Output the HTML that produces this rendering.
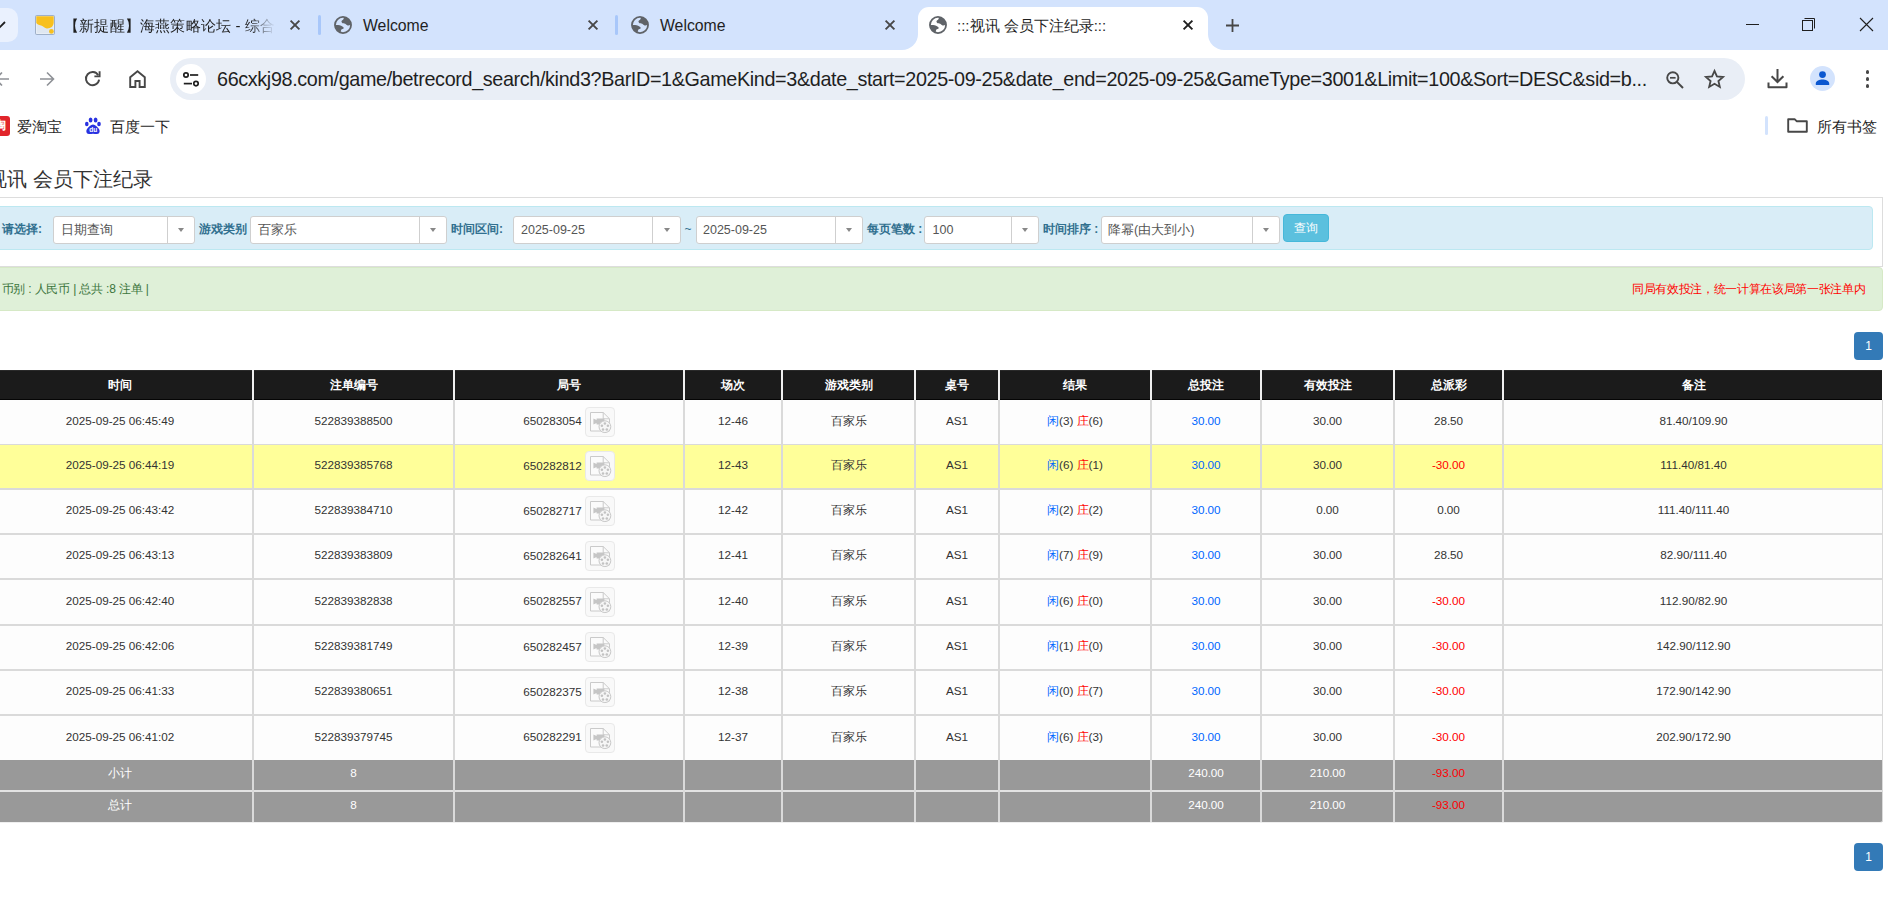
<!DOCTYPE html><html><head><meta charset="utf-8"><title>:::视讯 会员下注纪录:::</title><style>
*{box-sizing:border-box}
html,body{margin:0;padding:0}
body{width:1888px;height:898px;overflow:hidden;position:relative;background:#fff;font-family:"Liberation Sans",sans-serif;color:#333}
.a{position:absolute}
.t{position:absolute;white-space:nowrap;line-height:1}
svg{position:absolute;overflow:visible}
.sel{position:absolute;top:216px;height:28px;background:#fff;border:1px solid #cfcfcf;border-radius:3px}
.sel .v{position:absolute;top:0;line-height:26px;font-size:12.5px;color:#555;white-space:nowrap}
.sel .d{position:absolute;top:0;bottom:0;width:1px;background:#cfcfcf}
.sel .c{position:absolute;top:11px;width:0;height:0;border-left:3.5px solid transparent;border-right:3.5px solid transparent;border-top:4px solid #888}
.lbl{position:absolute;top:222px;font-size:12px;font-weight:bold;color:#31708f;white-space:nowrap;line-height:14px}
.cell{position:absolute;text-align:center;white-space:nowrap;font-size:11.7px;line-height:14px}
.vl{position:absolute;width:2px;background:#dadada}
.hl{position:absolute;height:2px;background:#dadada;left:0;width:1883px}
</style></head><body><div class="a" style="left:0;top:0;width:1888px;height:50px;background:#d3e3fd"></div>
<div class="a" style="left:-22px;top:8px;width:40px;height:34px;border-radius:10px;background:#eaf1fe"></div>
<svg style="left:-5px;top:18px" width="12" height="12" viewBox="0 0 12 12"><path d="M0 4 L5 9 L10 4" fill="none" stroke="#1f1f1f" stroke-width="1.8"/></svg>
<svg style="left:35px;top:15px" width="20" height="20" viewBox="0 0 20 20"><rect x="0.6" y="0.6" width="18.8" height="18.8" rx="1.5" fill="#dfe7f1" stroke="#9fb0c8" stroke-width="1.2"/><rect x="1.6" y="1.6" width="16.8" height="16.8" fill="none" stroke="#eef3fa" stroke-width="0.8"/><path d="M1.3 1.3 H18.7 V7.5 C18.6 11.5 15.6 13.6 11.8 13.4 C9.6 13.2 8.6 11.6 6.8 10.8 C4.6 9.8 2.2 9.8 1.3 8 Z" fill="#f8c01e"/><circle cx="16.4" cy="16.4" r="2.4" fill="#f8c01e"/></svg>
<div class="t" style="left:64px;top:17px;font-size:15px;letter-spacing:0.2px;color:#1f1f1f;width:211px;overflow:hidden;line-height:17px;-webkit-mask-image:linear-gradient(90deg,#000 186px,transparent 211px)">【新提醒】海燕策略论坛 - 综合</div>
<svg style="left:290px;top:20px" width="10" height="10" viewBox="0 0 10 10"><path d="M0.6 0.6 L9.4 9.4 M9.4 0.6 L0.6 9.4" stroke="#474747" stroke-width="1.9" fill="none"/></svg>
<div class="a" style="left:318px;top:15px;width:3px;height:20px;border-radius:2px;background:#a8c7fa"></div>
<svg style="left:334px;top:16px" width="18" height="18" viewBox="0 0 18 18"><circle cx="9" cy="9" r="8.05" fill="none" stroke="#5f6368" stroke-width="1.8"/><path d="M9.9 1.2 C12.5 1.4 15.6 3.4 16.6 6.6 L16.8 8.6 C15.6 9.4 14.6 9.6 13.6 9.4 C12.6 9.2 12.2 8.2 11.2 7.8 C10.2 7.4 8.6 7.6 8 6.8 C7.4 6 7.2 5.2 8 4.6 C9 3.8 9.8 3.2 9.9 1.2 Z" fill="#5f6368"/><path d="M1.2 9.1 C3.5 8.9 6.5 9.2 8.4 10.4 C9.4 11 10 11.6 9.7 12.2 C9.2 13 8 13 7.4 13.6 C6.8 14.4 6.8 15.4 6.8 16.8 C3.8 16 1.6 13 1.2 9.1 Z" fill="#5f6368"/></svg>
<div class="t" style="left:363px;top:17px;font-size:15.8px;color:#1f1f1f;line-height:17px">Welcome</div>
<svg style="left:588px;top:20px" width="10" height="10" viewBox="0 0 10 10"><path d="M0.6 0.6 L9.4 9.4 M9.4 0.6 L0.6 9.4" stroke="#474747" stroke-width="1.9" fill="none"/></svg>
<div class="a" style="left:615px;top:15px;width:3px;height:20px;border-radius:2px;background:#a8c7fa"></div>
<svg style="left:631px;top:16px" width="18" height="18" viewBox="0 0 18 18"><circle cx="9" cy="9" r="8.05" fill="none" stroke="#5f6368" stroke-width="1.8"/><path d="M9.9 1.2 C12.5 1.4 15.6 3.4 16.6 6.6 L16.8 8.6 C15.6 9.4 14.6 9.6 13.6 9.4 C12.6 9.2 12.2 8.2 11.2 7.8 C10.2 7.4 8.6 7.6 8 6.8 C7.4 6 7.2 5.2 8 4.6 C9 3.8 9.8 3.2 9.9 1.2 Z" fill="#5f6368"/><path d="M1.2 9.1 C3.5 8.9 6.5 9.2 8.4 10.4 C9.4 11 10 11.6 9.7 12.2 C9.2 13 8 13 7.4 13.6 C6.8 14.4 6.8 15.4 6.8 16.8 C3.8 16 1.6 13 1.2 9.1 Z" fill="#5f6368"/></svg>
<div class="t" style="left:660px;top:17px;font-size:15.8px;color:#1f1f1f;line-height:17px">Welcome</div>
<svg style="left:885px;top:20px" width="10" height="10" viewBox="0 0 10 10"><path d="M0.6 0.6 L9.4 9.4 M9.4 0.6 L0.6 9.4" stroke="#474747" stroke-width="1.9" fill="none"/></svg>
<div class="a" style="left:918px;top:7px;width:290px;height:43px;background:#fff;border-radius:11px 11px 0 0"></div>
<div class="a" style="left:902px;top:34px;width:16px;height:16px;background:#fff"></div>
<div class="a" style="left:902px;top:34px;width:16px;height:16px;background:#d3e3fd;border-bottom-right-radius:16px"></div>
<div class="a" style="left:1208px;top:34px;width:16px;height:16px;background:#fff"></div>
<div class="a" style="left:1208px;top:34px;width:16px;height:16px;background:#d3e3fd;border-bottom-left-radius:16px"></div>
<svg style="left:929px;top:16px" width="18" height="18" viewBox="0 0 18 18"><circle cx="9" cy="9" r="8.05" fill="none" stroke="#5f6368" stroke-width="1.8"/><path d="M9.9 1.2 C12.5 1.4 15.6 3.4 16.6 6.6 L16.8 8.6 C15.6 9.4 14.6 9.6 13.6 9.4 C12.6 9.2 12.2 8.2 11.2 7.8 C10.2 7.4 8.6 7.6 8 6.8 C7.4 6 7.2 5.2 8 4.6 C9 3.8 9.8 3.2 9.9 1.2 Z" fill="#5f6368"/><path d="M1.2 9.1 C3.5 8.9 6.5 9.2 8.4 10.4 C9.4 11 10 11.6 9.7 12.2 C9.2 13 8 13 7.4 13.6 C6.8 14.4 6.8 15.4 6.8 16.8 C3.8 16 1.6 13 1.2 9.1 Z" fill="#5f6368"/></svg>
<div class="t" style="left:957px;top:17px;font-size:15px;color:#1f1f1f;line-height:17px">:::视讯 会员下注纪录:::</div>
<svg style="left:1183px;top:20px" width="10" height="10" viewBox="0 0 10 10"><path d="M0.6 0.6 L9.4 9.4 M9.4 0.6 L0.6 9.4" stroke="#1f1f1f" stroke-width="1.9" fill="none"/></svg>
<svg style="left:1226px;top:19px" width="13" height="13" viewBox="0 0 13 13"><path d="M6.5 0 V13 M0 6.5 H13" stroke="#474747" stroke-width="1.8"/></svg>
<div class="a" style="left:1746px;top:24px;width:13px;height:1px;background:#1f1f1f"></div>
<svg style="left:1802px;top:18px" width="13" height="13" viewBox="0 0 13 13"><rect x="0.5" y="2.5" width="10" height="10" fill="none" stroke="#1f1f1f" stroke-width="1"/><path d="M2.5 0.5 H12.5 V10.5" fill="none" stroke="#1f1f1f" stroke-width="1"/></svg>
<svg style="left:1860px;top:18px" width="13" height="13" viewBox="0 0 13 13"><path d="M0 0 L13 13 M13 0 L0 13" stroke="#1f1f1f" stroke-width="1.1"/></svg>
<svg style="left:-6px;top:71px" width="16" height="16" viewBox="0 0 16 16"><path d="M15 8 H2 M8 1.5 L1.5 8 L8 14.5" fill="none" stroke="#8e9196" stroke-width="1.6"/></svg>
<svg style="left:39px;top:71px" width="16" height="16" viewBox="0 0 16 16"><path d="M1 8 H14 M8 1.5 L14.5 8 L8 14.5" fill="none" stroke="#8e9196" stroke-width="1.6"/></svg>
<svg style="left:84px;top:70px" width="17" height="17" viewBox="0 0 17 17"><path d="M14.2 5.2 A6.6 6.6 0 1 0 15.1 9.6" fill="none" stroke="#474747" stroke-width="1.9"/><path d="M15.6 1.2 V6.4 H10.4" fill="none" stroke="#474747" stroke-width="1.9"/></svg>
<svg style="left:129px;top:70px" width="17" height="18" viewBox="0 0 17 18"><path d="M1.2 17 V7.2 L8.5 1.2 L15.8 7.2 V17 H10.6 V11 H6.4 V17 Z" fill="none" stroke="#474747" stroke-width="1.9" stroke-linejoin="miter"/></svg>
<div class="a" style="left:170px;top:58px;width:1575px;height:42px;border-radius:21px;background:#e9eef6"></div>
<div class="a" style="left:176px;top:64px;width:30px;height:30px;border-radius:50%;background:#fff"></div>
<svg style="left:183px;top:72px" width="16" height="15" viewBox="0 0 16 15"><circle cx="3" cy="3" r="2.2" fill="none" stroke="#1f1f1f" stroke-width="1.7"/><path d="M7 3 H15.2" stroke="#1f1f1f" stroke-width="1.7"/><circle cx="13" cy="11.6" r="2.2" fill="none" stroke="#1f1f1f" stroke-width="1.7"/><path d="M0.8 11.6 H9" stroke="#1f1f1f" stroke-width="1.7"/></svg>
<div class="t" style="left:217px;top:68.5px;font-size:19.8px;letter-spacing:-0.365px;line-height:21px;color:#1f1f1f">66cxkj98.com/game/betrecord_search/kind3?BarID=1&amp;GameKind=3&amp;date_start=2025-09-25&amp;date_end=2025-09-25&amp;GameType=3001&amp;Limit=100&amp;Sort=DESC&amp;sid=b...</div>
<svg style="left:1666px;top:71px" width="18" height="18" viewBox="0 0 18 18"><circle cx="6.8" cy="6.8" r="5.6" fill="none" stroke="#474747" stroke-width="1.9"/><path d="M4 6.8 H9.6" stroke="#474747" stroke-width="1.7"/><path d="M10.9 10.9 L17 17" stroke="#474747" stroke-width="2"/></svg>
<svg style="left:1704px;top:69px" width="21" height="20" viewBox="0 0 24 23"><path d="M12 2.2 L14.8 8.6 L21.8 9.2 L16.5 13.8 L18.1 20.6 L12 17 L5.9 20.6 L7.5 13.8 L2.2 9.2 L9.2 8.6 Z" fill="none" stroke="#474747" stroke-width="2.1" stroke-linejoin="miter"/></svg>
<svg style="left:1767px;top:68px" width="21" height="21" viewBox="0 0 21 21"><path d="M10.5 1 V14 M4.6 8.2 L10.5 14 L16.4 8.2" fill="none" stroke="#474747" stroke-width="2"/><path d="M1.5 14.5 V19.2 H19.5 V14.5" fill="none" stroke="#474747" stroke-width="2" stroke-linejoin="round"/></svg>
<div class="a" style="left:1810px;top:66px;width:25px;height:25px;border-radius:50%;background:#d3e3fd"></div>
<svg style="left:1815px;top:71px" width="15" height="14" viewBox="0 0 15 14"><circle cx="7.5" cy="3.6" r="3.4" fill="#0b57d0"/><path d="M0.8 14 V12.4 C0.8 9.6 4.6 8.4 7.5 8.4 C10.4 8.4 14.2 9.6 14.2 12.4 V14 Z" fill="#0b57d0"/></svg>
<div class="a" style="left:1865.8px;top:70.3px;width:3.4px;height:3.4px;border-radius:50%;background:#474747"></div>
<div class="a" style="left:1865.8px;top:77.3px;width:3.4px;height:3.4px;border-radius:50%;background:#474747"></div>
<div class="a" style="left:1865.8px;top:84.3px;width:3.4px;height:3.4px;border-radius:50%;background:#474747"></div>
<div class="a" style="left:-10px;top:116px;width:20px;height:20px;border-radius:3px;background:#e1252b"></div>
<div class="t" style="left:-6px;top:119px;font-size:12px;color:#fff;font-weight:bold">淘</div>
<div class="t" style="left:17px;top:118.5px;font-size:14.7px;line-height:17px;color:#1f1f1f">爱淘宝</div>
<svg style="left:84px;top:117px" width="18" height="18" viewBox="0 0 18 18"><ellipse cx="6.6" cy="2.9" rx="1.9" ry="2.5" fill="#2932e1"/><ellipse cx="11.6" cy="2.9" rx="1.9" ry="2.5" fill="#2932e1"/><ellipse cx="2.8" cy="7" rx="1.8" ry="2.2" fill="#2932e1"/><ellipse cx="15" cy="7" rx="1.8" ry="2.2" fill="#2932e1"/><path d="M9 7.4 C6.6 7.4 4.8 9.8 3.2 11.8 C1.8 13.6 2 16.9 5 17.1 C6.6 17.2 7.6 16.7 9 16.7 C10.4 16.7 11.4 17.2 13 17.1 C16 16.9 16.2 13.6 14.8 11.8 C13.2 9.8 11.4 7.4 9 7.4 Z" fill="#2932e1"/><text x="9.2" y="15.4" font-size="6.6" font-family="Liberation Sans" font-weight="bold" fill="#fff" text-anchor="middle">du</text></svg>
<div class="t" style="left:110px;top:118.5px;font-size:14.7px;line-height:17px;color:#1f1f1f">百度一下</div>
<div class="a" style="left:1765px;top:116px;width:3px;height:19px;border-radius:2px;background:#d3e3fd"></div>
<svg style="left:1787px;top:118px" width="21" height="15" viewBox="0 0 21 15"><path d="M1.2 13.8 V1.2 H7.6 L9.6 3.2 H19.8 V13.8 Z" fill="none" stroke="#474747" stroke-width="1.9" stroke-linejoin="round"/></svg>
<div class="t" style="left:1817px;top:118.5px;font-size:14.7px;line-height:17px;color:#1f1f1f">所有书签</div>
<div class="t" style="left:-13px;top:168px;font-size:20px;line-height:23px;color:#333">视讯 会员下注纪录</div>
<div class="a" style="left:-20px;top:197px;width:1903px;height:70px;border:1px solid #dddddd;border-radius:0"></div>
<div class="a" style="left:-20px;top:206px;width:1893px;height:44px;background:#d9edf7;border:1px solid #bce8f1;border-radius:4px"></div>
<div class="lbl" style="left:2px">请选择:</div>
<div class="sel" style="left:52.5px;width:142.0px"><div class="v" style="left:7.5px">日期查询</div><div class="d" style="left:113.5px"></div><div class="c" style="left:124.75px"></div></div>
<div class="lbl" style="left:198.5px">游戏类别</div>
<div class="sel" style="left:249.5px;width:197.0px"><div class="v" style="left:7.5px">百家乐</div><div class="d" style="left:168.5px"></div><div class="c" style="left:179.75px"></div></div>
<div class="lbl" style="left:451px">时间区间:</div>
<div class="sel" style="left:512.5px;width:168.0px"><div class="v" style="left:7.5px">2025-09-25</div><div class="d" style="left:138.5px"></div><div class="c" style="left:150.25px"></div></div>
<div class="t" style="left:684.5px;top:223px;font-size:12px;color:#31708f">~</div>
<div class="sel" style="left:695.5px;width:167.0px"><div class="v" style="left:6.5px">2025-09-25</div><div class="d" style="left:138.0px"></div><div class="c" style="left:149.5px"></div></div>
<div class="lbl" style="left:867px">每页笔数 :</div>
<div class="sel" style="left:923.5px;width:115.0px"><div class="v" style="left:8.0px">100</div><div class="d" style="left:86.5px"></div><div class="c" style="left:97.75px"></div></div>
<div class="lbl" style="left:1043px">时间排序 :</div>
<div class="sel" style="left:1100.5px;width:179.0px"><div class="v" style="left:6.5px">降幂(由大到小)</div><div class="d" style="left:150.0px"></div><div class="c" style="left:161.5px"></div></div>
<div class="a" style="left:1283px;top:214px;width:46px;height:28px;border-radius:4px;background:#5bc0de;border:1px solid #46b8da"></div>
<div class="t" style="left:1294px;top:221px;font-size:11.8px;line-height:14px;color:#fff">查询</div>
<div class="a" style="left:-20px;top:267px;width:1903px;height:44px;background:#dff0d8;border:1px solid #d6e9c6;border-radius:4px"></div>
<div class="t" style="left:1.5px;top:281.5px;font-size:12px;letter-spacing:-0.18px;line-height:14px;color:#3c763d">币别 : 人民币 | 总共 :8 注单 |</div>
<div class="t" style="left:1632px;top:281.5px;font-size:12px;letter-spacing:-0.34px;line-height:14px;color:#ff0000">同局有效投注，统一计算在该局第一张注单内</div>
<div class="a" style="left:1854px;top:332px;width:29px;height:28px;border-radius:4px;background:#337ab7"></div><div class="t" style="left:1854px;top:339px;width:29px;text-align:center;font-size:12px;line-height:14px;color:#fff">1</div>
<div class="a" style="left:1854px;top:843px;width:29px;height:28px;border-radius:4px;background:#337ab7"></div><div class="t" style="left:1854px;top:850px;width:29px;text-align:center;font-size:12px;line-height:14px;color:#fff">1</div>
<div class="a" style="left:0;top:370px;width:1882px;height:30px;background:#1b1b1b;border-top:1px solid #2a2a2a;border-bottom:1px solid #050505"></div>
<div class="cell" style="left:-12px;width:264px;top:378px;color:#fff;font-weight:bold;font-size:12px">时间</div>
<div class="cell" style="left:254px;width:199px;top:378px;color:#fff;font-weight:bold;font-size:12px">注单编号</div>
<div class="cell" style="left:455px;width:228px;top:378px;color:#fff;font-weight:bold;font-size:12px">局号</div>
<div class="cell" style="left:685px;width:96px;top:378px;color:#fff;font-weight:bold;font-size:12px">场次</div>
<div class="cell" style="left:783px;width:131px;top:378px;color:#fff;font-weight:bold;font-size:12px">游戏类别</div>
<div class="cell" style="left:916px;width:82px;top:378px;color:#fff;font-weight:bold;font-size:12px">桌号</div>
<div class="cell" style="left:1000px;width:150px;top:378px;color:#fff;font-weight:bold;font-size:12px">结果</div>
<div class="cell" style="left:1152px;width:108px;top:378px;color:#fff;font-weight:bold;font-size:12px">总投注</div>
<div class="cell" style="left:1262px;width:131px;top:378px;color:#fff;font-weight:bold;font-size:12px">有效投注</div>
<div class="cell" style="left:1395px;width:107px;top:378px;color:#fff;font-weight:bold;font-size:12px">总派彩</div>
<div class="cell" style="left:1504px;width:379px;top:378px;color:#fff;font-weight:bold;font-size:12px">备注</div>
<div class="a" style="left:0;top:400px;width:1882px;height:44px;background:#fdfdfd"></div>
<div class="cell" style="left:-12px;width:264px;top:413.5px">2025-09-25 06:45:49</div>
<div class="cell" style="left:254px;width:199px;top:413.5px">522839388500</div>
<div class="cell" style="left:455px;width:228px;top:413.5px;top:405.0px;line-height:31px">650283054<span style="display:inline-block;vertical-align:middle;position:relative;width:30px;height:30px;margin-left:3px;border:1px solid #e9e9e9;border-radius:4px;background:#f9f9f9"><svg style="left:0px;top:0px" width="28" height="28" viewBox="0 0 28 28"><path d="M4.5 4.5 H17.2 L23.5 10.8 V23 H4.5 Z" fill="#fbfbfb" stroke="#cacaca" stroke-width="1"/><path d="M17.2 4.5 V10.8 H23.5" fill="none" stroke="#cacaca" stroke-width="1"/><path d="M7.4 10.4 L10.6 12 V15 L7.4 16.6 Z M10.6 10.4 H18.4 V16.6 H10.6 Z" fill="#c6c6c6"/><circle cx="18.9" cy="18.7" r="5.9" fill="#f6f6f6" stroke="#c8c8c8" stroke-width="1"/><circle cx="18.9" cy="15.6" r="1.25" fill="#c2c2c2"/><circle cx="21.9" cy="17.8" r="1.25" fill="#c2c2c2"/><circle cx="20.8" cy="21.4" r="1.25" fill="#c2c2c2"/><circle cx="17" cy="21.4" r="1.25" fill="#c2c2c2"/><circle cx="15.9" cy="17.8" r="1.25" fill="#c2c2c2"/></svg></span></div>
<div class="cell" style="left:685px;width:96px;top:413.5px">12-46</div>
<div class="cell" style="left:783px;width:131px;top:413.5px">百家乐</div>
<div class="cell" style="left:916px;width:82px;top:413.5px">AS1</div>
<div class="cell" style="left:1000px;width:150px;top:413.5px"><span style="color:#0066ff">闲</span>(3) <span style="color:#ff0000">庄</span>(6)</div>
<div class="cell" style="left:1152px;width:108px;top:413.5px;color:#0066ff">30.00</div>
<div class="cell" style="left:1262px;width:131px;top:413.5px">30.00</div>
<div class="cell" style="left:1395px;width:107px;top:413.5px">28.50</div>
<div class="cell" style="left:1504px;width:379px;top:413.5px">81.40/109.90</div>
<div class="a" style="left:0;top:445px;width:1882px;height:43px;background:#ffff99"></div>
<div class="cell" style="left:-12px;width:264px;top:458.0px">2025-09-25 06:44:19</div>
<div class="cell" style="left:254px;width:199px;top:458.0px">522839385768</div>
<div class="cell" style="left:455px;width:228px;top:458.0px;top:449.5px;line-height:31px">650282812<span style="display:inline-block;vertical-align:middle;position:relative;width:30px;height:30px;margin-left:3px;border:1px solid #e9e9e9;border-radius:4px;background:#f9f9f9"><svg style="left:0px;top:0px" width="28" height="28" viewBox="0 0 28 28"><path d="M4.5 4.5 H17.2 L23.5 10.8 V23 H4.5 Z" fill="#fbfbfb" stroke="#cacaca" stroke-width="1"/><path d="M17.2 4.5 V10.8 H23.5" fill="none" stroke="#cacaca" stroke-width="1"/><path d="M7.4 10.4 L10.6 12 V15 L7.4 16.6 Z M10.6 10.4 H18.4 V16.6 H10.6 Z" fill="#c6c6c6"/><circle cx="18.9" cy="18.7" r="5.9" fill="#f6f6f6" stroke="#c8c8c8" stroke-width="1"/><circle cx="18.9" cy="15.6" r="1.25" fill="#c2c2c2"/><circle cx="21.9" cy="17.8" r="1.25" fill="#c2c2c2"/><circle cx="20.8" cy="21.4" r="1.25" fill="#c2c2c2"/><circle cx="17" cy="21.4" r="1.25" fill="#c2c2c2"/><circle cx="15.9" cy="17.8" r="1.25" fill="#c2c2c2"/></svg></span></div>
<div class="cell" style="left:685px;width:96px;top:458.0px">12-43</div>
<div class="cell" style="left:783px;width:131px;top:458.0px">百家乐</div>
<div class="cell" style="left:916px;width:82px;top:458.0px">AS1</div>
<div class="cell" style="left:1000px;width:150px;top:458.0px"><span style="color:#0066ff">闲</span>(6) <span style="color:#ff0000">庄</span>(1)</div>
<div class="cell" style="left:1152px;width:108px;top:458.0px;color:#0066ff">30.00</div>
<div class="cell" style="left:1262px;width:131px;top:458.0px">30.00</div>
<div class="cell" style="left:1395px;width:107px;top:458.0px;color:#ff0000">-30.00</div>
<div class="cell" style="left:1504px;width:379px;top:458.0px">111.40/81.40</div>
<div class="a" style="left:0;top:490px;width:1882px;height:43px;background:#fdfdfd"></div>
<div class="cell" style="left:-12px;width:264px;top:503.0px">2025-09-25 06:43:42</div>
<div class="cell" style="left:254px;width:199px;top:503.0px">522839384710</div>
<div class="cell" style="left:455px;width:228px;top:503.0px;top:494.5px;line-height:31px">650282717<span style="display:inline-block;vertical-align:middle;position:relative;width:30px;height:30px;margin-left:3px;border:1px solid #e9e9e9;border-radius:4px;background:#f9f9f9"><svg style="left:0px;top:0px" width="28" height="28" viewBox="0 0 28 28"><path d="M4.5 4.5 H17.2 L23.5 10.8 V23 H4.5 Z" fill="#fbfbfb" stroke="#cacaca" stroke-width="1"/><path d="M17.2 4.5 V10.8 H23.5" fill="none" stroke="#cacaca" stroke-width="1"/><path d="M7.4 10.4 L10.6 12 V15 L7.4 16.6 Z M10.6 10.4 H18.4 V16.6 H10.6 Z" fill="#c6c6c6"/><circle cx="18.9" cy="18.7" r="5.9" fill="#f6f6f6" stroke="#c8c8c8" stroke-width="1"/><circle cx="18.9" cy="15.6" r="1.25" fill="#c2c2c2"/><circle cx="21.9" cy="17.8" r="1.25" fill="#c2c2c2"/><circle cx="20.8" cy="21.4" r="1.25" fill="#c2c2c2"/><circle cx="17" cy="21.4" r="1.25" fill="#c2c2c2"/><circle cx="15.9" cy="17.8" r="1.25" fill="#c2c2c2"/></svg></span></div>
<div class="cell" style="left:685px;width:96px;top:503.0px">12-42</div>
<div class="cell" style="left:783px;width:131px;top:503.0px">百家乐</div>
<div class="cell" style="left:916px;width:82px;top:503.0px">AS1</div>
<div class="cell" style="left:1000px;width:150px;top:503.0px"><span style="color:#0066ff">闲</span>(2) <span style="color:#ff0000">庄</span>(2)</div>
<div class="cell" style="left:1152px;width:108px;top:503.0px;color:#0066ff">30.00</div>
<div class="cell" style="left:1262px;width:131px;top:503.0px">0.00</div>
<div class="cell" style="left:1395px;width:107px;top:503.0px">0.00</div>
<div class="cell" style="left:1504px;width:379px;top:503.0px">111.40/111.40</div>
<div class="a" style="left:0;top:535px;width:1882px;height:43px;background:#fdfdfd"></div>
<div class="cell" style="left:-12px;width:264px;top:548.0px">2025-09-25 06:43:13</div>
<div class="cell" style="left:254px;width:199px;top:548.0px">522839383809</div>
<div class="cell" style="left:455px;width:228px;top:548.0px;top:539.5px;line-height:31px">650282641<span style="display:inline-block;vertical-align:middle;position:relative;width:30px;height:30px;margin-left:3px;border:1px solid #e9e9e9;border-radius:4px;background:#f9f9f9"><svg style="left:0px;top:0px" width="28" height="28" viewBox="0 0 28 28"><path d="M4.5 4.5 H17.2 L23.5 10.8 V23 H4.5 Z" fill="#fbfbfb" stroke="#cacaca" stroke-width="1"/><path d="M17.2 4.5 V10.8 H23.5" fill="none" stroke="#cacaca" stroke-width="1"/><path d="M7.4 10.4 L10.6 12 V15 L7.4 16.6 Z M10.6 10.4 H18.4 V16.6 H10.6 Z" fill="#c6c6c6"/><circle cx="18.9" cy="18.7" r="5.9" fill="#f6f6f6" stroke="#c8c8c8" stroke-width="1"/><circle cx="18.9" cy="15.6" r="1.25" fill="#c2c2c2"/><circle cx="21.9" cy="17.8" r="1.25" fill="#c2c2c2"/><circle cx="20.8" cy="21.4" r="1.25" fill="#c2c2c2"/><circle cx="17" cy="21.4" r="1.25" fill="#c2c2c2"/><circle cx="15.9" cy="17.8" r="1.25" fill="#c2c2c2"/></svg></span></div>
<div class="cell" style="left:685px;width:96px;top:548.0px">12-41</div>
<div class="cell" style="left:783px;width:131px;top:548.0px">百家乐</div>
<div class="cell" style="left:916px;width:82px;top:548.0px">AS1</div>
<div class="cell" style="left:1000px;width:150px;top:548.0px"><span style="color:#0066ff">闲</span>(7) <span style="color:#ff0000">庄</span>(9)</div>
<div class="cell" style="left:1152px;width:108px;top:548.0px;color:#0066ff">30.00</div>
<div class="cell" style="left:1262px;width:131px;top:548.0px">30.00</div>
<div class="cell" style="left:1395px;width:107px;top:548.0px">28.50</div>
<div class="cell" style="left:1504px;width:379px;top:548.0px">82.90/111.40</div>
<div class="a" style="left:0;top:580px;width:1882px;height:44px;background:#fdfdfd"></div>
<div class="cell" style="left:-12px;width:264px;top:593.5px">2025-09-25 06:42:40</div>
<div class="cell" style="left:254px;width:199px;top:593.5px">522839382838</div>
<div class="cell" style="left:455px;width:228px;top:593.5px;top:585.0px;line-height:31px">650282557<span style="display:inline-block;vertical-align:middle;position:relative;width:30px;height:30px;margin-left:3px;border:1px solid #e9e9e9;border-radius:4px;background:#f9f9f9"><svg style="left:0px;top:0px" width="28" height="28" viewBox="0 0 28 28"><path d="M4.5 4.5 H17.2 L23.5 10.8 V23 H4.5 Z" fill="#fbfbfb" stroke="#cacaca" stroke-width="1"/><path d="M17.2 4.5 V10.8 H23.5" fill="none" stroke="#cacaca" stroke-width="1"/><path d="M7.4 10.4 L10.6 12 V15 L7.4 16.6 Z M10.6 10.4 H18.4 V16.6 H10.6 Z" fill="#c6c6c6"/><circle cx="18.9" cy="18.7" r="5.9" fill="#f6f6f6" stroke="#c8c8c8" stroke-width="1"/><circle cx="18.9" cy="15.6" r="1.25" fill="#c2c2c2"/><circle cx="21.9" cy="17.8" r="1.25" fill="#c2c2c2"/><circle cx="20.8" cy="21.4" r="1.25" fill="#c2c2c2"/><circle cx="17" cy="21.4" r="1.25" fill="#c2c2c2"/><circle cx="15.9" cy="17.8" r="1.25" fill="#c2c2c2"/></svg></span></div>
<div class="cell" style="left:685px;width:96px;top:593.5px">12-40</div>
<div class="cell" style="left:783px;width:131px;top:593.5px">百家乐</div>
<div class="cell" style="left:916px;width:82px;top:593.5px">AS1</div>
<div class="cell" style="left:1000px;width:150px;top:593.5px"><span style="color:#0066ff">闲</span>(6) <span style="color:#ff0000">庄</span>(0)</div>
<div class="cell" style="left:1152px;width:108px;top:593.5px;color:#0066ff">30.00</div>
<div class="cell" style="left:1262px;width:131px;top:593.5px">30.00</div>
<div class="cell" style="left:1395px;width:107px;top:593.5px;color:#ff0000">-30.00</div>
<div class="cell" style="left:1504px;width:379px;top:593.5px">112.90/82.90</div>
<div class="a" style="left:0;top:626px;width:1882px;height:43px;background:#fdfdfd"></div>
<div class="cell" style="left:-12px;width:264px;top:639.0px">2025-09-25 06:42:06</div>
<div class="cell" style="left:254px;width:199px;top:639.0px">522839381749</div>
<div class="cell" style="left:455px;width:228px;top:639.0px;top:630.5px;line-height:31px">650282457<span style="display:inline-block;vertical-align:middle;position:relative;width:30px;height:30px;margin-left:3px;border:1px solid #e9e9e9;border-radius:4px;background:#f9f9f9"><svg style="left:0px;top:0px" width="28" height="28" viewBox="0 0 28 28"><path d="M4.5 4.5 H17.2 L23.5 10.8 V23 H4.5 Z" fill="#fbfbfb" stroke="#cacaca" stroke-width="1"/><path d="M17.2 4.5 V10.8 H23.5" fill="none" stroke="#cacaca" stroke-width="1"/><path d="M7.4 10.4 L10.6 12 V15 L7.4 16.6 Z M10.6 10.4 H18.4 V16.6 H10.6 Z" fill="#c6c6c6"/><circle cx="18.9" cy="18.7" r="5.9" fill="#f6f6f6" stroke="#c8c8c8" stroke-width="1"/><circle cx="18.9" cy="15.6" r="1.25" fill="#c2c2c2"/><circle cx="21.9" cy="17.8" r="1.25" fill="#c2c2c2"/><circle cx="20.8" cy="21.4" r="1.25" fill="#c2c2c2"/><circle cx="17" cy="21.4" r="1.25" fill="#c2c2c2"/><circle cx="15.9" cy="17.8" r="1.25" fill="#c2c2c2"/></svg></span></div>
<div class="cell" style="left:685px;width:96px;top:639.0px">12-39</div>
<div class="cell" style="left:783px;width:131px;top:639.0px">百家乐</div>
<div class="cell" style="left:916px;width:82px;top:639.0px">AS1</div>
<div class="cell" style="left:1000px;width:150px;top:639.0px"><span style="color:#0066ff">闲</span>(1) <span style="color:#ff0000">庄</span>(0)</div>
<div class="cell" style="left:1152px;width:108px;top:639.0px;color:#0066ff">30.00</div>
<div class="cell" style="left:1262px;width:131px;top:639.0px">30.00</div>
<div class="cell" style="left:1395px;width:107px;top:639.0px;color:#ff0000">-30.00</div>
<div class="cell" style="left:1504px;width:379px;top:639.0px">142.90/112.90</div>
<div class="a" style="left:0;top:671px;width:1882px;height:43px;background:#fdfdfd"></div>
<div class="cell" style="left:-12px;width:264px;top:684.0px">2025-09-25 06:41:33</div>
<div class="cell" style="left:254px;width:199px;top:684.0px">522839380651</div>
<div class="cell" style="left:455px;width:228px;top:684.0px;top:675.5px;line-height:31px">650282375<span style="display:inline-block;vertical-align:middle;position:relative;width:30px;height:30px;margin-left:3px;border:1px solid #e9e9e9;border-radius:4px;background:#f9f9f9"><svg style="left:0px;top:0px" width="28" height="28" viewBox="0 0 28 28"><path d="M4.5 4.5 H17.2 L23.5 10.8 V23 H4.5 Z" fill="#fbfbfb" stroke="#cacaca" stroke-width="1"/><path d="M17.2 4.5 V10.8 H23.5" fill="none" stroke="#cacaca" stroke-width="1"/><path d="M7.4 10.4 L10.6 12 V15 L7.4 16.6 Z M10.6 10.4 H18.4 V16.6 H10.6 Z" fill="#c6c6c6"/><circle cx="18.9" cy="18.7" r="5.9" fill="#f6f6f6" stroke="#c8c8c8" stroke-width="1"/><circle cx="18.9" cy="15.6" r="1.25" fill="#c2c2c2"/><circle cx="21.9" cy="17.8" r="1.25" fill="#c2c2c2"/><circle cx="20.8" cy="21.4" r="1.25" fill="#c2c2c2"/><circle cx="17" cy="21.4" r="1.25" fill="#c2c2c2"/><circle cx="15.9" cy="17.8" r="1.25" fill="#c2c2c2"/></svg></span></div>
<div class="cell" style="left:685px;width:96px;top:684.0px">12-38</div>
<div class="cell" style="left:783px;width:131px;top:684.0px">百家乐</div>
<div class="cell" style="left:916px;width:82px;top:684.0px">AS1</div>
<div class="cell" style="left:1000px;width:150px;top:684.0px"><span style="color:#0066ff">闲</span>(0) <span style="color:#ff0000">庄</span>(7)</div>
<div class="cell" style="left:1152px;width:108px;top:684.0px;color:#0066ff">30.00</div>
<div class="cell" style="left:1262px;width:131px;top:684.0px">30.00</div>
<div class="cell" style="left:1395px;width:107px;top:684.0px;color:#ff0000">-30.00</div>
<div class="cell" style="left:1504px;width:379px;top:684.0px">172.90/142.90</div>
<div class="a" style="left:0;top:716px;width:1882px;height:44px;background:#fdfdfd"></div>
<div class="cell" style="left:-12px;width:264px;top:729.5px">2025-09-25 06:41:02</div>
<div class="cell" style="left:254px;width:199px;top:729.5px">522839379745</div>
<div class="cell" style="left:455px;width:228px;top:729.5px;top:721.0px;line-height:31px">650282291<span style="display:inline-block;vertical-align:middle;position:relative;width:30px;height:30px;margin-left:3px;border:1px solid #e9e9e9;border-radius:4px;background:#f9f9f9"><svg style="left:0px;top:0px" width="28" height="28" viewBox="0 0 28 28"><path d="M4.5 4.5 H17.2 L23.5 10.8 V23 H4.5 Z" fill="#fbfbfb" stroke="#cacaca" stroke-width="1"/><path d="M17.2 4.5 V10.8 H23.5" fill="none" stroke="#cacaca" stroke-width="1"/><path d="M7.4 10.4 L10.6 12 V15 L7.4 16.6 Z M10.6 10.4 H18.4 V16.6 H10.6 Z" fill="#c6c6c6"/><circle cx="18.9" cy="18.7" r="5.9" fill="#f6f6f6" stroke="#c8c8c8" stroke-width="1"/><circle cx="18.9" cy="15.6" r="1.25" fill="#c2c2c2"/><circle cx="21.9" cy="17.8" r="1.25" fill="#c2c2c2"/><circle cx="20.8" cy="21.4" r="1.25" fill="#c2c2c2"/><circle cx="17" cy="21.4" r="1.25" fill="#c2c2c2"/><circle cx="15.9" cy="17.8" r="1.25" fill="#c2c2c2"/></svg></span></div>
<div class="cell" style="left:685px;width:96px;top:729.5px">12-37</div>
<div class="cell" style="left:783px;width:131px;top:729.5px">百家乐</div>
<div class="cell" style="left:916px;width:82px;top:729.5px">AS1</div>
<div class="cell" style="left:1000px;width:150px;top:729.5px"><span style="color:#0066ff">闲</span>(6) <span style="color:#ff0000">庄</span>(3)</div>
<div class="cell" style="left:1152px;width:108px;top:729.5px;color:#0066ff">30.00</div>
<div class="cell" style="left:1262px;width:131px;top:729.5px">30.00</div>
<div class="cell" style="left:1395px;width:107px;top:729.5px;color:#ff0000">-30.00</div>
<div class="cell" style="left:1504px;width:379px;top:729.5px">202.90/172.90</div>
<div class="a" style="left:0;top:760px;width:1883px;height:30px;background:#999999;"></div>
<div class="cell" style="left:-12px;width:264px;top:766.0px;color:#ffffff">小计</div>
<div class="cell" style="left:254px;width:199px;top:766.0px;color:#ffffff">8</div>
<div class="cell" style="left:1152px;width:108px;top:766.0px;color:#ffffff">240.00</div>
<div class="cell" style="left:1262px;width:131px;top:766.0px;color:#ffffff">210.00</div>
<div class="cell" style="left:1395px;width:107px;top:766.0px;color:#ff0000">-93.00</div>
<div class="a" style="left:0;top:792px;width:1883px;height:30px;background:#999999;border-bottom-right-radius:3px;"></div>
<div class="cell" style="left:-12px;width:264px;top:798.0px;color:#ffffff">总计</div>
<div class="cell" style="left:254px;width:199px;top:798.0px;color:#ffffff">8</div>
<div class="cell" style="left:1152px;width:108px;top:798.0px;color:#ffffff">240.00</div>
<div class="cell" style="left:1262px;width:131px;top:798.0px;color:#ffffff">210.00</div>
<div class="cell" style="left:1395px;width:107px;top:798.0px;color:#ff0000">-93.00</div>
<div class="a" style="left:0;top:822px;width:1882px;height:1px;background:#efefef"></div>
<div class="a" style="left:0;top:444px;width:1883px;height:1px;background:#dadada"></div>
<div class="hl" style="top:488px"></div>
<div class="hl" style="top:533px"></div>
<div class="hl" style="top:578px"></div>
<div class="hl" style="top:624px"></div>
<div class="hl" style="top:669px"></div>
<div class="hl" style="top:714px"></div>
<div class="a" style="left:0;top:790px;width:1882px;height:2px;background:#e3e3e3"></div>
<div class="vl" style="left:252px;top:400px;height:422px"></div>
<div class="vl" style="left:252px;top:370px;height:30px;background:#efefef"></div>
<div class="vl" style="left:453px;top:400px;height:422px"></div>
<div class="vl" style="left:453px;top:370px;height:30px;background:#efefef"></div>
<div class="vl" style="left:683px;top:400px;height:422px"></div>
<div class="vl" style="left:683px;top:370px;height:30px;background:#efefef"></div>
<div class="vl" style="left:781px;top:400px;height:422px"></div>
<div class="vl" style="left:781px;top:370px;height:30px;background:#efefef"></div>
<div class="vl" style="left:914px;top:400px;height:422px"></div>
<div class="vl" style="left:914px;top:370px;height:30px;background:#efefef"></div>
<div class="vl" style="left:998px;top:400px;height:422px"></div>
<div class="vl" style="left:998px;top:370px;height:30px;background:#efefef"></div>
<div class="vl" style="left:1150px;top:400px;height:422px"></div>
<div class="vl" style="left:1150px;top:370px;height:30px;background:#efefef"></div>
<div class="vl" style="left:1260px;top:400px;height:422px"></div>
<div class="vl" style="left:1260px;top:370px;height:30px;background:#efefef"></div>
<div class="vl" style="left:1393px;top:400px;height:422px"></div>
<div class="vl" style="left:1393px;top:370px;height:30px;background:#efefef"></div>
<div class="vl" style="left:1502px;top:400px;height:422px"></div>
<div class="vl" style="left:1502px;top:370px;height:30px;background:#efefef"></div>
<div class="a" style="left:1882px;top:400px;width:1px;height:422px;background:#dadada"></div></body></html>
